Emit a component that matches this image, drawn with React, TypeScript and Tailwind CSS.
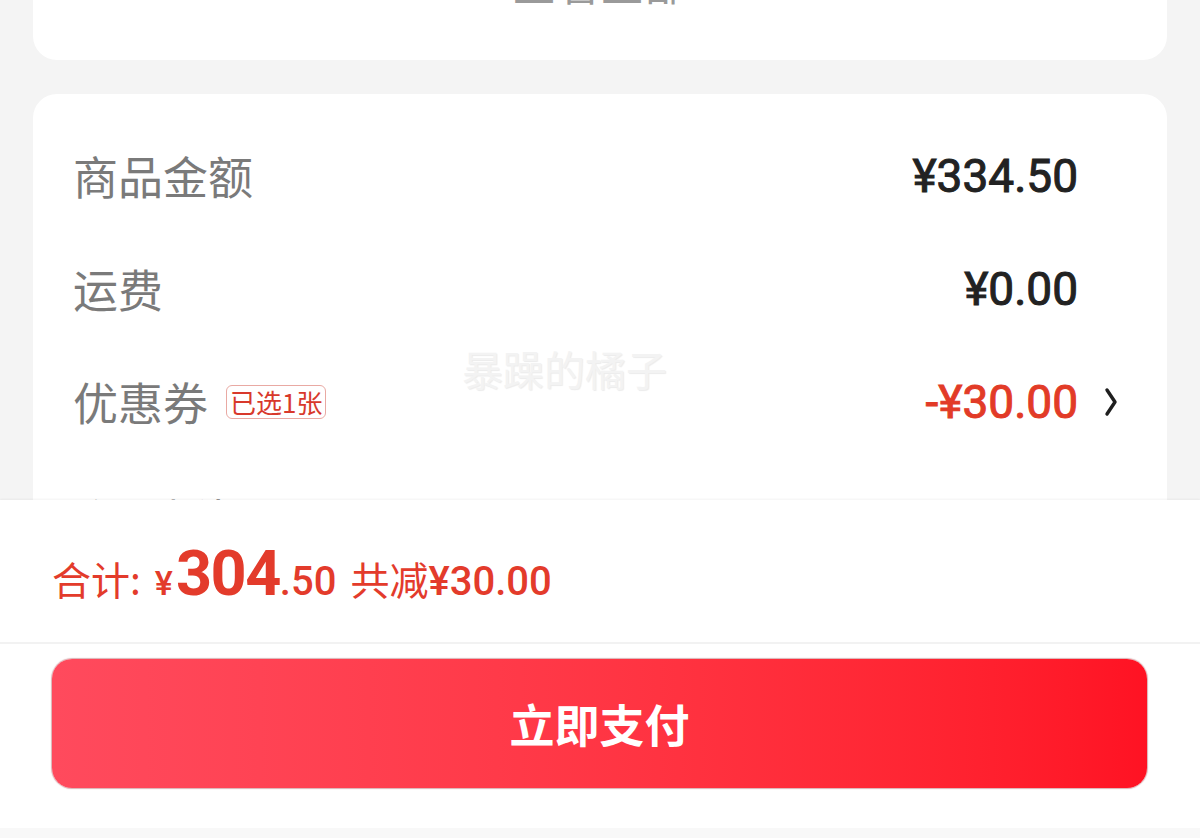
import React from "react";

const CJK = "font-['Noto_Sans_CJK_SC','Noto_Sans',sans-serif]";
const NUM = "font-['Roboto','Noto_Sans_CJK_SC',sans-serif]";

function Chevron() {
  return (
    <svg width="14" height="30" viewBox="0 0 14 30" fill="none">
      <path d="M3 3 L11 15 L3 27" stroke="#1f1f1f" strokeWidth="3.4" strokeLinecap="round" strokeLinejoin="round" />
    </svg>
  );
}

function Row({ label, value, valueClass, badge, chevron, extra }: { label: string; value: string; valueClass: string; badge?: string; chevron?: boolean; extra?: string }) {
  return (
    <div className={`flex h-[113px] items-center pl-[40px] ${extra ?? ""}`}>
      <div className={`flex items-center text-[45px] leading-none text-[#7a7a7a] ${CJK}`}>
        <span>{label}</span>
        {badge && (
          <span className="ml-[18px] flex h-[34px] items-center rounded-[6px] border border-[#e9a9a3] px-[3px] text-[26px] leading-none text-[#d8392c]">
            {badge}
          </span>
        )}
      </div>
      <div className="flex-1" />
      <div className={`text-[46px] font-normal leading-none [-webkit-text-stroke:1px_currentColor] ${NUM} ${valueClass}`}>{value}</div>
      <div className="flex w-[89px] items-center pl-[26px]">{chevron && <Chevron />}</div>
    </div>
  );
}

export default function App() {
  return (
    <div className={`relative flex h-[838px] w-[1200px] flex-col overflow-hidden bg-[#f4f4f4] ${CJK}`}>
      <div className="flex-1 overflow-hidden px-[33px]">
        <div className="-mt-[60px] flex h-[120px] justify-center rounded-[24px] bg-white pt-[20px]">
          <span className="text-[44px] leading-[44px] text-[#9a9a9a]">查看全部</span>
        </div>
        <div className="mt-[34px] rounded-[24px] bg-white pt-[25px]">
          <Row label="商品金额" value="¥334.50" valueClass="text-[#222222]" />
          <Row label="运费" value="¥0.00" valueClass="text-[#222222]" />
          <Row label="优惠券" value="-¥30.00" valueClass="text-[#e23b27]" badge="已选1张" chevron />
          <Row label="会员折扣" value="¥0.00" valueClass="text-[#222222]" extra="pt-[8px]" />
        </div>
      </div>

      <div className="pointer-events-none absolute left-[462px] top-[348px] text-[41px] leading-none text-[#f3f3f3] [text-shadow:1px_1px_1px_rgba(0,0,0,0.08)]">
        暴躁的橘子
      </div>

      <div className="flex h-[338px] flex-col bg-white shadow-[0_-1px_2px_rgba(0,0,0,0.05)]">
        <div className="flex h-[144px] items-center border-b-2 border-[#f2f2f2] pl-[52px] pt-[4px] text-[#e33b2b]">
          <div className="flex items-baseline">
            <span className={`text-[39px] leading-none ${CJK}`}>合计:</span>
            <span className={`ml-[14px] text-[34px] font-medium leading-none ${NUM}`}>¥</span>
            <span className={`ml-[3px] text-[63px] font-bold leading-none tracking-[-1.5px] ${NUM}`}>304</span>
            <span className={`text-[40px] font-medium leading-none ${NUM}`}>.50</span>
            <span className={`ml-[14px] text-[39px] leading-none ${CJK}`}>共减</span>
            <span className={`text-[40px] font-medium leading-none ${NUM}`}>¥30.00</span>
          </div>
        </div>
        <div className="flex flex-1 flex-col">
          <div className="px-[52px] pt-[15px]">
            <div className="flex h-[129px] w-[1095px] items-center justify-center rounded-[20px] bg-gradient-to-r from-[#ff4a5d] to-[#ff1223] shadow-[0_0_1px_1px_rgba(150,30,40,0.35)]">
              <span className="text-[45px] font-bold leading-none text-white">立即支付</span>
            </div>
          </div>
          <div className="flex-1" />
          <div className="h-[10px] bg-[#f8f8f8]" />
        </div>
      </div>
    </div>
  );
}
